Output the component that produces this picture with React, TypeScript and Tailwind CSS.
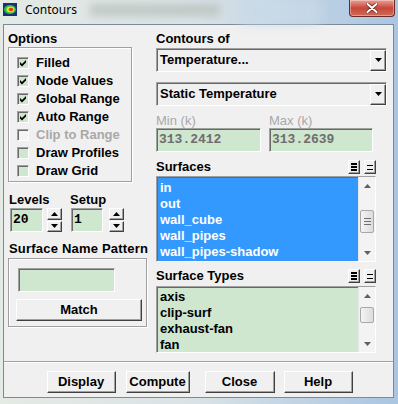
import React from "react";

const sunken =
  "border border-t-[#a0a0a0] border-l-[#a0a0a0] border-b-white border-r-white shadow-[inset_1px_1px_0_#696969]";
const raised =
  "border border-t-white border-l-white border-b-[#404040] border-r-[#404040] shadow-[inset_-1px_-1px_0_#a0a0a0] bg-[#f0f0f0]";
const etched = "border border-[#a0a0a0] shadow-[1px_1px_0_#fff,inset_1px_1px_0_#fff]";

function Check({ label, checked, disabled }: { label: string; checked?: boolean; disabled?: boolean }) {
  return (
    <div className="flex items-center h-[18px]">
      <span
        className={`w-[12px] h-[12px] flex items-center justify-center ${sunken} ${
          disabled ? "bg-[#f4f4f4]" : "bg-[#cfe6cf]"
        }`}
      >
        {checked && (
          <svg width="7" height="7" viewBox="0 0 7 7">
            <path d="M0 2 L2 4 L6 0 L6 2.5 L2 6.5 L0 4.5 Z" fill="#000" />
          </svg>
        )}
      </span>
      <span className={`ml-[7px] ${disabled ? "text-[#a8a8a8]" : "text-black"}`}>{label}</span>
    </div>
  );
}

function Spin() {
  return (
    <div className="flex flex-col w-[15px] h-[24px] gap-[1px]">
      <div className={`${raised} flex-1 flex items-center justify-center`}>
        <svg width="7" height="4" viewBox="0 0 7 4">
          <path d="M0 4 L3.5 0 L7 4Z" fill="#000" />
        </svg>
      </div>
      <div className={`${raised} flex-1 flex items-center justify-center`}>
        <svg width="7" height="4" viewBox="0 0 7 4">
          <path d="M0 0 L3.5 4 L7 0Z" fill="#000" />
        </svg>
      </div>
    </div>
  );
}

function Dropdown({ value }: { value: string }) {
  return (
    <div className={`h-[24px] flex items-center bg-[#f0f0f0] ${sunken}`}>
      <span className="flex-1 pl-[3px]">{value}</span>
      <div className={`${raised} w-[16px] h-[21px] flex items-center justify-center`}>
        <svg width="7" height="4" viewBox="0 0 7 4">
          <path d="M0 0 L3.5 4 L7 0Z" fill="#000" />
        </svg>
      </div>
    </div>
  );
}

function ListIcons() {
  return (
    <div className="flex items-center gap-[4px] mr-[11px]">
      <div className={`${raised} w-[12px] h-[14px] flex items-center justify-center`}>
        <svg width="6" height="8" viewBox="0 0 6 8">
          <rect x="0" y="0" width="6" height="2" fill="#000" />
          <rect x="0" y="3" width="6" height="2" fill="#000" />
          <rect x="0" y="6" width="6" height="2" fill="#000" />
        </svg>
      </div>
      <div className={`${raised} w-[12px] h-[14px] flex items-center justify-center`}>
        <svg width="6" height="5" viewBox="0 0 6 5">
          <rect x="0" y="0" width="6" height="1" fill="#000" />
          <rect x="0" y="4" width="6" height="1" fill="#000" />
        </svg>
      </div>
    </div>
  );
}

function Scrollbar({ thumbTop, thumbH }: { thumbTop: number; thumbH: number }) {
  return (
    <div className="w-[17px] bg-[#f3f3f3] flex flex-col border-l border-[#e6e6e6]">
      <div className="h-[17px] flex items-center justify-center">
        <svg width="7" height="4" viewBox="0 0 7 4">
          <path d="M0 4 L3.5 0 L7 4Z" fill="#606060" />
        </svg>
      </div>
      <div className="flex-1 relative">
        <div
          className="absolute left-[1px] right-[1px] rounded-[2px] border border-[#a8a8a8] bg-gradient-to-r from-[#f4f4f4] to-[#dcdcdc] flex flex-col items-center justify-center gap-[2px]"
          style={{ top: thumbTop, height: thumbH }}
        >
          {thumbH > 18 && (
            <>
              <span className="block w-[7px] h-[1px] bg-[#707070]" />
              <span className="block w-[7px] h-[1px] bg-[#707070]" />
              <span className="block w-[7px] h-[1px] bg-[#707070]" />
            </>
          )}
        </div>
      </div>
      <div className="h-[17px] flex items-center justify-center">
        <svg width="7" height="4" viewBox="0 0 7 4">
          <path d="M0 0 L3.5 4 L7 0Z" fill="#606060" />
        </svg>
      </div>
    </div>
  );
}

function Button({ label, w, className = "" }: { label: string; w: string; className?: string }) {
  return (
    <div className={`${raised} ${w} h-[22px] flex items-center justify-center ${className}`}>{label}</div>
  );
}

export default function App() {
  return (
    <div className="w-[398px] h-[404px] flex flex-col overflow-hidden bg-gradient-to-r from-[#e4eae4] via-[#d9e2e6] to-[#a9c5e2] font-['Liberation_Sans',Arial,sans-serif] text-[13px] font-bold leading-[16px] text-black">
      {/* title bar */}
      <div className="h-[24px] flex items-start relative">
        <div className="absolute left-[90px] top-[4px] w-[130px] h-[12px] bg-[#b3bdb6] blur-[4px] opacity-70" />
        <div className="absolute left-[240px] top-[0px] w-[80px] h-[24px] bg-[#c9dae8] blur-[6px] opacity-80" />
        <svg className="mt-[3px] ml-[3px] relative" width="14" height="13" viewBox="0 0 14 13">
          <rect width="14" height="13" fill="#1c2f7a" />
          <ellipse cx="7" cy="6.5" rx="6" ry="4.5" fill="#2bbf3a" />
          <ellipse cx="7.5" cy="6.5" rx="4" ry="3" fill="#e8e02a" />
          <ellipse cx="8" cy="6.5" rx="2.3" ry="1.8" fill="#e23a1c" />
        </svg>
        <span className="relative ml-[8px] mt-[2px] font-['Noto_Sans',sans-serif] font-normal text-[12px] leading-[16px] text-black">
          Contours
        </span>
        <div className="relative ml-auto mr-[3px] w-[46px] h-[17px] rounded-b-[4px] border border-t-0 border-[#6b2a25] bg-gradient-to-b from-[#e8a095] via-[#c7463a] to-[#d06a56] flex items-center justify-center shadow-[inset_0_0_0_1px_rgba(255,255,255,0.35)]">
          <svg width="12" height="10" viewBox="0 0 12 10">
            <path d="M1.5 1 L10.5 9 M10.5 1 L1.5 9" stroke="#5a2420" strokeWidth="3.4" strokeLinecap="round" />
            <path d="M1.5 1 L10.5 9 M10.5 1 L1.5 9" stroke="#ffffff" strokeWidth="2" strokeLinecap="round" />
          </svg>
        </div>
      </div>

      {/* client area */}
      <div className="ml-[3px] mr-[4px] h-[374px] border border-[#7c8a98] bg-[#f0f0f0] flex flex-col">
        <div className="h-[336px] flex pl-[4px] pt-[6px]">
          {/* left column */}
          <div className="w-[142px] flex flex-col">
            <div className="h-[16px]">Options</div>
            <div className={`w-[124px] h-[135px] ${etched} pt-[6px] pl-[8px]`}>
              <Check label="Filled" checked />
              <Check label="Node Values" checked />
              <Check label="Global Range" checked />
              <Check label="Auto Range" checked />
              <Check label="Clip to Range" disabled />
              <Check label="Draw Profiles" />
              <Check label="Draw Grid" />
            </div>

            <div className="flex mt-[10px]">
              <div className="flex flex-col">
                <div className="h-[16px] pl-[1px]">Levels</div>
                <div className="flex ml-[2px]">
                  <div className={`w-[33px] h-[24px] bg-[#cfe6cf] ${sunken} pl-[2px] flex items-center font-['Liberation_Mono',monospace]`}>
                    20
                  </div>
                  <div className="ml-[4px]">
                    <Spin />
                  </div>
                </div>
              </div>
              <div className="flex flex-col ml-[8px]">
                <div className="h-[16px]">Setup</div>
                <div className="flex ml-[1px]">
                  <div className={`w-[32px] h-[24px] bg-[#cfe6cf] ${sunken} pl-[2px] flex items-center font-['Liberation_Mono',monospace]`}>
                    1
                  </div>
                  <div className="ml-[6px]">
                    <Spin />
                  </div>
                </div>
              </div>
            </div>

            <div className="h-[16px] mt-[9px] whitespace-nowrap pl-[1px] tracking-[0.2px]">Surface Name Pattern</div>
            <div className={`w-[139px] h-[69px] ${etched} pt-[9px] pl-[9px] mt-[1px]`}>
              <div className={`w-[97px] h-[24px] bg-[#cfe6cf] ${sunken}`} />
              <Button label="Match" w="w-[126px]" className="-ml-[2px] mt-[7px]" />
            </div>
          </div>

          {/* right column */}
          <div className="w-[231px] ml-[6px] flex flex-col">
            <div className="h-[16px]">Contours of</div>
            <div className="mt-[1px]">
              <Dropdown value="Temperature..." />
            </div>
            <div className="mt-[10px]">
              <Dropdown value="Static Temperature" />
            </div>
            <div className="flex mt-[8px]">
              <div className="w-[105px] flex flex-col">
                <div className="h-[14px] leading-[14px] font-normal text-[#a8a8a8]">Min (k)</div>
                <div className={`h-[24px] bg-[#cfe6cf] ${sunken} pl-[2px] flex items-center font-['Liberation_Mono',monospace] text-[#6e6e6e]`}>
                  313.2412
                </div>
              </div>
              <div className="w-[104px] ml-[8px] flex flex-col">
                <div className="h-[14px] leading-[14px] font-normal text-[#a8a8a8]">Max (k)</div>
                <div className={`h-[24px] bg-[#cfe6cf] ${sunken} pl-[2px] flex items-center font-['Liberation_Mono',monospace] text-[#6e6e6e]`}>
                  313.2639
                </div>
              </div>
            </div>

            <div className="h-[16px] mt-[7px] flex items-center">
              <span className="flex-1">Surfaces</span>
              <ListIcons />
            </div>
            <div className={`w-[220px] h-[86px] mt-[1px] flex bg-[#3399ff] ${sunken}`}>
              <div className="flex-1 pt-[3px] pl-[3px] text-white">
                <div className="h-[16px]">in</div>
                <div className="h-[16px]">out</div>
                <div className="h-[16px]">wall_cube</div>
                <div className="h-[16px]">wall_pipes</div>
                <div className="h-[16px]">wall_pipes-shadow</div>
              </div>
              <Scrollbar thumbTop={16} thumbH={23} />
            </div>

            <div className="h-[16px] mt-[6px] flex items-center">
              <span className="flex-1">Surface Types</span>
              <ListIcons />
            </div>
            <div className={`w-[220px] h-[67px] mt-[2px] flex bg-[#cfe6cf] ${sunken}`}>
              <div className="flex-1 pt-[2px] pl-[3px]">
                <div className="h-[16px]">axis</div>
                <div className="h-[16px]">clip-surf</div>
                <div className="h-[16px]">exhaust-fan</div>
                <div className="h-[16px]">fan</div>
              </div>
              <Scrollbar thumbTop={3} thumbH={16} />
            </div>
          </div>
        </div>

        {/* separator */}
        <div className="h-[2px] border-t border-[#a0a0a0] border-b border-b-white" />

        <div className="flex-1 flex items-start justify-center pt-[8px] pl-[2px]">
          <Button label="Display" w="w-[69px]" />
          <Button label="Compute" w="w-[64px]" className="ml-[10px]" />
          <Button label="Close" w="w-[70px]" className="ml-[15px]" />
          <Button label="Help" w="w-[69px]" className="ml-[9px]" />
        </div>
      </div>
    </div>
  );
}
